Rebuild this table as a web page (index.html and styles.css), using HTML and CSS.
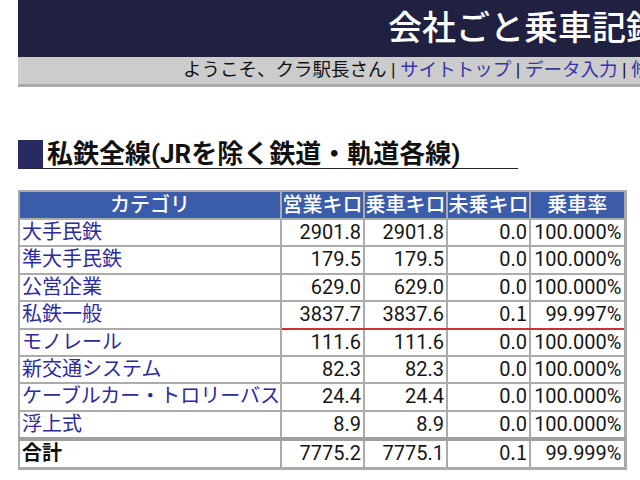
FILE: index.html
```html
<!DOCTYPE html>
<html lang="ja">
<head>
<meta charset="utf-8">
<title>会社ごと乗車記録</title>
<link rel="stylesheet" href="styles.css">
</head>
<body>
<header class="site-header">
  <div class="title-bar"><h1 class="site-title">会社ごと乗車記録</h1></div>
  <nav class="nav-bar">ようこそ、クラ駅長さん | <a href="#">サイトトップ</a> | <a href="#">データ入力</a> | <a href="#">修正</a></nav>
</header>
<main class="content">
  <h2 class="section-title">私鉄全線(JRを除く鉄道・軌道各線)</h2>
  <table class="summary">
    <colgroup>
      <col class="c-cat"><col class="c-num"><col class="c-num"><col class="c-num"><col class="c-rate">
    </colgroup>
    <thead>
      <tr><th>カテゴリ</th><th>営業キロ</th><th>乗車キロ</th><th>未乗キロ</th><th>乗車率</th></tr>
    </thead>
    <tbody>
      <tr><td class="cat"><a href="#">大手民鉄</a></td><td>2901.8</td><td>2901.8</td><td>0.0</td><td>100.000%</td></tr>
      <tr><td class="cat"><a href="#">準大手民鉄</a></td><td>179.5</td><td>179.5</td><td>0.0</td><td>100.000%</td></tr>
      <tr><td class="cat"><a href="#">公営企業</a></td><td>629.0</td><td>629.0</td><td>0.0</td><td>100.000%</td></tr>
      <tr class="incomplete"><td class="cat"><a href="#">私鉄一般</a></td><td>3837.7</td><td>3837.6</td><td><span class="rest">0.1</span></td><td>99.997%</td></tr>
      <tr><td class="cat"><a href="#">モノレール</a></td><td>111.6</td><td>111.6</td><td>0.0</td><td>100.000%</td></tr>
      <tr><td class="cat"><a href="#">新交通システム</a></td><td>82.3</td><td>82.3</td><td>0.0</td><td>100.000%</td></tr>
      <tr><td class="cat"><a href="#">ケーブルカー・トロリーバス</a></td><td>24.4</td><td>24.4</td><td>0.0</td><td>100.000%</td></tr>
      <tr><td class="cat"><a href="#">浮上式</a></td><td>8.9</td><td>8.9</td><td>0.0</td><td>100.000%</td></tr>
    </tbody>
    <tfoot>
      <tr><td class="cat total">合計</td><td>7775.2</td><td>7775.1</td><td><span class="rest">0.1</span></td><td>99.999%</td></tr>
    </tfoot>
  </table>
</main>
</body>
</html>
```

FILE: styles.css
```css
html, body {
  margin: 0;
  padding: 0;
  overflow: hidden;
  background: #ffffff;
}
body {
  padding-left: 18px;
  font-family: Roboto, "Noto Sans CJK JP", sans-serif;
  color: #111;
}
.site-header {
  width: 780px;
}
.title-bar {
  background: #202040;
  height: 57px;
  box-sizing: border-box;
  padding-left: 370px;
  white-space: nowrap;
  overflow: hidden;
}
.site-title {
  margin: 0;
  font-family: "Noto Sans CJK JP", sans-serif;
  font-weight: 500;
  font-size: 34px;
  line-height: 52px;
  color: #ffffff;
}
.nav-bar {
  background: #cccccc;
  height: 27px;
  border-bottom: 3px solid #a9a9a9;
  padding-left: 165px;
  font-size: 18.5px;
  line-height: 27px;
  white-space: nowrap;
  color: #111;
}
.nav-bar a {
  color: #3636a8;
  text-decoration: none;
}
.content {
  padding-top: 53px;
}
.section-title {
  display: inline-block;
  margin: 0;
  padding: 0 58px 0 4px;
  border-left: 25px solid #2a2a62;
  border-bottom: 1px solid #222;
  font-size: 26px;
  font-weight: 700;
  line-height: 28px;
  color: #111;
}
.summary {
  display: table;
  margin-top: 21px;
  border-collapse: collapse;
  table-layout: fixed;
  width: 606px;
  font-size: 20px;
  border-bottom: 3px solid #aaaaaa;
  border-right: 3px solid #aaaaaa;
}
.c-cat { width: 262px; }
.c-num { width: 83px; }
.c-rate { width: 95px; }
.summary th,
.summary td {
  border: 2px solid #ababab;
  padding: 0 2px;
  height: 25.4px;
  line-height: 25.4px;
  white-space: nowrap;
  overflow: hidden;
}
.summary th {
  background: #3b5ca8;
  color: #ffffff;
  font-weight: 500;
  text-align: center;
  padding: 0;
  height: 26px;
  line-height: 26px;
}
.summary td {
  text-align: right;
  color: #151515;
}
.summary td.cat {
  text-align: left;
}
.summary td.cat a {
  color: #2b2b9c;
  text-decoration: none;
}
.summary td.total {
  font-weight: 700;
  color: #111;
}
.summary .rest {
  font-family: "Noto Sans CJK JP", sans-serif;
  line-height: 1;
}
.summary tr.incomplete td {
  border-bottom: 2px solid #c8323a;
}
.summary tr.incomplete td.cat {
  border-bottom: 2px solid #ababab;
}
.summary tfoot td {
  border-top: 4px solid #a0a0a0;
}
```
